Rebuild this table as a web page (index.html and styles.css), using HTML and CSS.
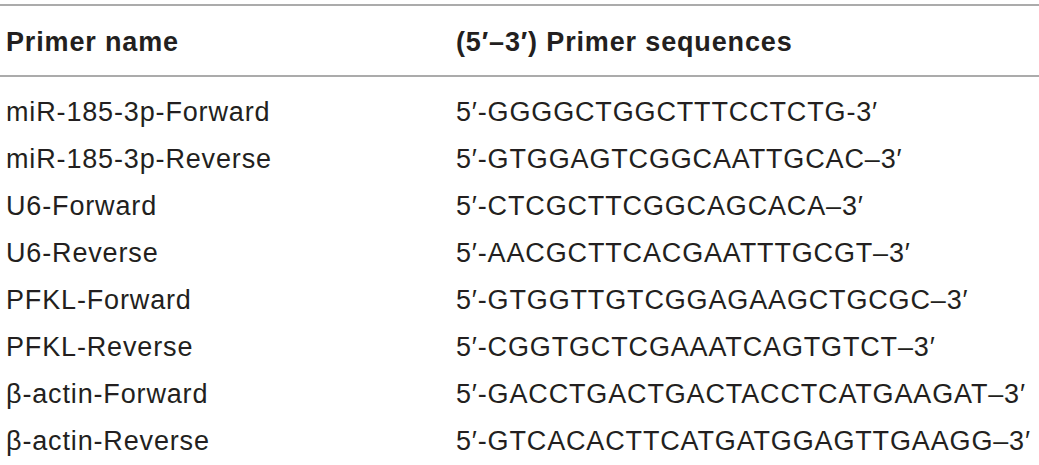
FILE: index.html
```html
<!DOCTYPE html>
<html lang="en">
<head>
<meta charset="utf-8">
<title>Primer sequences</title>
<link rel="stylesheet" href="styles.css">
</head>
<body>
<table class="primers">
  <thead>
    <tr>
      <th class="col-name">Primer name</th>
      <th class="col-seq">(5′–3′) Primer sequences</th>
    </tr>
  </thead>
  <tbody>
    <tr><td class="col-name">miR-185-3p-Forward</td><td class="col-seq">5′-GGGGCTGGCTTTCCTCTG-3′</td></tr>
    <tr><td class="col-name">miR-185-3p-Reverse</td><td class="col-seq">5′-GTGGAGTCGGCAATTGCAC–3′</td></tr>
    <tr><td class="col-name">U6-Forward</td><td class="col-seq">5′-CTCGCTTCGGCAGCACA–3′</td></tr>
    <tr><td class="col-name">U6-Reverse</td><td class="col-seq">5′-AACGCTTCACGAATTTGCGT–3′</td></tr>
    <tr><td class="col-name">PFKL-Forward</td><td class="col-seq">5′-GTGGTTGTCGGAGAAGCTGCGC–3′</td></tr>
    <tr><td class="col-name">PFKL-Reverse</td><td class="col-seq">5′-CGGTGCTCGAAATCAGTGTCT–3′</td></tr>
    <tr><td class="col-name">β-actin-Forward</td><td class="col-seq">5′-GACCTGACTGACTACCTCATGAAGAT–3′</td></tr>
    <tr><td class="col-name">β-actin-Reverse</td><td class="col-seq">5′-GTCACACTTCATGATGGAGTTGAAGG–3′</td></tr>
  </tbody>
</table>
</body>
</html>
```

FILE: styles.css
```css
html, body {
  margin: 0;
  padding: 0;
  background: #ffffff;
}

body {
  font-family: "Liberation Sans", Arial, sans-serif;
  color: #231f20;
  overflow: hidden;
}

.primers {
  width: 100%;
  margin-top: 4px;
  border-collapse: collapse;
  border-spacing: 0;
}

.primers th,
.primers td {
  padding: 0;
  font-size: 27px;
  line-height: 47px;
  letter-spacing: 0.85px;
  text-align: left;
  vertical-align: baseline;
  white-space: nowrap;
}

.primers th {
  font-weight: bold;
  letter-spacing: 0.85px;
  padding-top: 13px;
  padding-bottom: 9px;
  border-top: 2px solid #ababab;
  border-bottom: 2px solid #ababab;
}

.primers td {
  font-weight: normal;
}

.primers tbody tr:first-child td {
  padding-top: 12px;
}

.col-name {
  width: 450px;
  padding-left: 6px !important;
}
```
